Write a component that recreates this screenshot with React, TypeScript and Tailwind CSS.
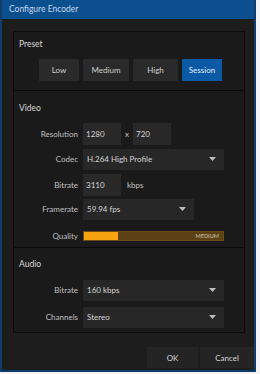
import type { ReactNode } from "react";

const font = { fontFamily: 'Lato, "Open Sans", sans-serif' };

function Caret() {
  return (
    <svg width="7" height="4" viewBox="0 0 7 4" className="shrink-0">
      <path d="M0 0h7L3.5 4z" fill="#bdbdbd" />
    </svg>
  );
}

function Row({ label, children, className = "" }: { label: string; children: ReactNode; className?: string }) {
  return (
    <div className={`flex items-center ${className}`}>
      <span className="w-[64px] pr-[5px] text-right text-[8px] text-[#c0c0c0]">{label}</span>
      {children}
    </div>
  );
}

function Select({ value, width }: { value: string; width: string }) {
  return (
    <div className={`flex h-[21px] items-center justify-between bg-[#272727] pl-[4px] pr-[8px] text-[8px] text-[#d6d6d6] ${width}`}>
      <span>{value}</span>
      <Caret />
    </div>
  );
}

function Field({ value }: { value: string }) {
  return (
    <div className="flex h-[22px] w-[38px] items-center bg-[#292929] pl-[3px] text-[8px] text-[#d6d6d6]">
      {value}
    </div>
  );
}

export default function App() {
  const presets = [
    { name: "Low", w: "w-[40px]" },
    { name: "Medium", w: "w-[46px]" },
    { name: "High", w: "w-[45px]" },
    { name: "Session", w: "w-[40px]", active: true },
  ];

  return (
    <div className="h-[374px] w-[260px] bg-[#f4f4f4]" style={font}>
      <div className="flex h-[372px] w-[256px] flex-col border-x-2 border-b-2 border-[#0e3d6b] bg-[#1d1d1d]">
        <div className="flex h-[19px] shrink-0 items-center bg-[#0b4f8e] pl-[7px] text-[8.5px] text-[#c9d8ea]">
          Configure Encoder
        </div>

        <div className="pl-[11px] pr-[9px] pt-[12px]">
          <div className="flex h-[302px] flex-col border border-[#0b0b0b] bg-[#1a1a1a]">
            {/* Preset */}
            <div className="h-[59px] shrink-0 border-b border-[#0b0b0b] pl-[5px] pt-[6px]">
              <div className="text-[8.5px] text-[#d8d8d8]">Preset</div>
              <div className="mt-[8px] flex gap-[4px] pl-[20px]">
                {presets.map((p) => (
                  <div
                    key={p.name}
                    className={`flex h-[22px] items-center justify-center text-[8px] ${p.w} ${
                      p.active ? "bg-[#0c5aa5] text-[#e4eef8]" : "bg-[#2a2a2a] text-[#cfcfcf]"
                    }`}
                  >
                    {p.name}
                  </div>
                ))}
              </div>
            </div>

            {/* Video */}
            <div className="h-[157px] shrink-0 border-b border-[#0b0b0b] pl-[5px] pt-[11px]">
              <div className="text-[8.5px] text-[#d8d8d8]">Video</div>
              <Row label="Resolution" className="mt-[8px]">
                <Field value="1280" />
                <span className="w-[12px] text-center text-[8px] text-[#c0c0c0]">x</span>
                <Field value="720" />
              </Row>
              <Row label="Codec" className="mt-[4px]">
                <Select value="H.264 High Profile" width="w-[141px]" />
              </Row>
              <Row label="Bitrate" className="mt-[4px]">
                <Field value="3110" />
                <span className="pl-[6px] text-[8px] text-[#c0c0c0]">kbps</span>
              </Row>
              <Row label="Framerate" className="mt-[3px]">
                <Select value="59.94 fps" width="w-[111px]" />
              </Row>
              <Row label="Quality" className="mt-[10px]">
                <div className="relative flex h-[10px] w-[141px] items-center border border-[#6b4c16] bg-[#5c4115]">
                  <div className="h-full w-[34px] bg-[#f6a310]" />
                  <span className="absolute right-[4px] text-[5.5px] font-bold text-[#b9ab8e]">MEDIUM</span>
                </div>
              </Row>
            </div>

            {/* Audio */}
            <div className="flex-1 pl-[5px] pt-[10px]">
              <div className="text-[8.5px] text-[#d8d8d8]">Audio</div>
              <Row label="Bitrate" className="mt-[9px]">
                <Select value="160 kbps" width="w-[141px]" />
              </Row>
              <Row label="Channels" className="mt-[6px]">
                <Select value="Stereo" width="w-[141px]" />
              </Row>
            </div>
          </div>
        </div>

        <div className="mt-[14px] flex justify-end gap-[2px]">
          <div className="flex h-[21px] w-[51px] items-center justify-center bg-[#242424] text-[8px] text-[#d6d6d6]">OK</div>
          <div className="flex h-[21px] w-[54px] items-center justify-center bg-[#242424] text-[8px] text-[#d6d6d6]">Cancel</div>
        </div>
      </div>
    </div>
  );
}
